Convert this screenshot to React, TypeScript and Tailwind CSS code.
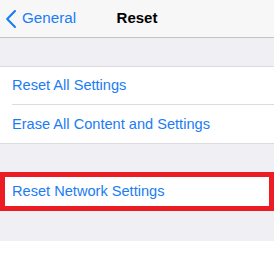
import React from 'react';

const Row: React.FC<{ label: string; last?: boolean }> = ({ label, last }) => (
  <div className="h-[38px] pl-3 bg-white">
    <div className={`h-full flex items-center pt-px ${last ? '' : 'border-b border-[#dcdce0]'}`}>
      <span className="text-[14.6px] text-[#1a7cf5]">{label}</span>
    </div>
  </div>
);

const App: React.FC = () => {
  return (
    <div className="w-[277px] h-[254px] bg-white font-['Liberation_Sans',Arial,sans-serif] overflow-hidden">
      <div className="w-[274px] bg-[#efeff4]">
        <header className="relative h-[38px] bg-[#f7f7f8] border-b border-[#c4c4c8] flex items-center justify-center">
          <div className="absolute left-[5px] top-0 h-full flex items-center gap-[5px] text-[#1a7cf5]">
            <svg width="12" height="20" viewBox="0 0 12 20" fill="none">
              <path d="M10 2 L2.2 10 L10 18" stroke="#1a7cf5" strokeWidth="2.1" strokeLinecap="round" strokeLinejoin="round" />
            </svg>
            <span className="text-[15.2px]">General</span>
          </div>
          <h1 className="text-[15px] font-semibold text-black">Reset</h1>
        </header>

        <div className="h-[29px] border-b border-[#dcdce0]" />

        <section className="border-b border-[#dcdce0]">
          <Row label="Reset All Settings" />
          <Row label="Erase All Content and Settings" last />
        </section>

        <div className="h-[28px]" />

        <section className="border-[5px] border-[#ec1c24] bg-white h-[39px] flex items-center pl-[7px] pt-px">
          <span className="text-[14.6px] text-[#1a7cf5]">Reset Network Settings</span>
        </section>

        <div className="h-[30px]" />
      </div>
    </div>
  );
};

export default App;
